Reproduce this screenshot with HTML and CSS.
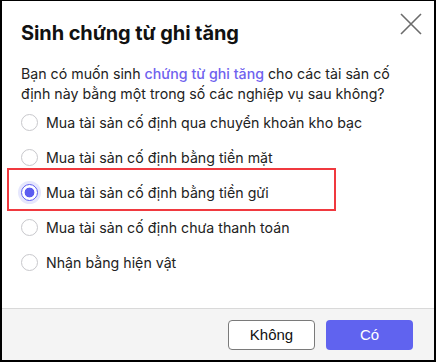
FILE: index.html
```html
<!DOCTYPE html>
<html lang="vi">
<head>
<meta charset="utf-8">
<link rel="stylesheet" href="styles.css">
</head>
<body>
<div class="dialog">
  <div class="content">
    <div class="header">
      <h1 class="title">Sinh chứng từ ghi tăng</h1>
      <button class="close" aria-label="Đóng">
        <svg width="22" height="22" viewBox="0 0 22 22"><path d="M1 1L21 21M21 1L1 21" stroke="#6b6b6b" stroke-width="1.6" fill="none"/></svg>
      </button>
    </div>
    <p class="desc">Bạn có muốn sinh <span class="link">chứng từ ghi tăng</span> cho các tài sản cố định này bằng một trong số các nghiệp vụ sau không?</p>
    <div class="options">
      <label class="option"><span class="radio"></span><span>Mua tài sản cố định qua chuyển khoản kho bạc</span></label>
      <label class="option"><span class="radio"></span><span>Mua tài sản cố định bằng tiền mặt</span></label>
      <label class="option selected"><span class="radio checked"></span><span>Mua tài sản cố định bằng tiền gửi</span></label>
      <label class="option"><span class="radio"></span><span>Mua tài sản cố định chưa thanh toán</span></label>
      <label class="option"><span class="radio"></span><span>Nhận bằng hiện vật</span></label>
    </div>
  </div>
  <div class="footer">
    <button class="btn btn-secondary">Không</button>
    <button class="btn btn-primary">Có</button>
  </div>
</div>
</body>
</html>
```
FILE: styles.css
```css
* { box-sizing: border-box; }
html, body { margin: 0; padding: 0; background: #fff; }
body { font-family: Inter, "Noto Sans", sans-serif; color: #1f1f1f; }
.dialog {
  width: 436px;
  height: 362px;
  border: 1px solid #000;
  border-left-width: 2px;
  border-right-width: 2px;
  border-bottom-width: 2px;
  display: flex;
  flex-direction: column;
}
.content { flex: 1; padding: 12px 12px 0 19px; }
.header { display: flex; justify-content: space-between; align-items: flex-start; }
.title { margin: 6px 0 0; font-size: 20px; line-height: 28px; font-weight: 700; color: #111; letter-spacing: -0.1px; }
.close { border: 0; background: none; padding: 0; margin: 0; width: 22px; height: 22px; cursor: pointer; }
.close svg { display: block; }
.desc { margin: 17px 0 0; font-size: 14.2px; line-height: 20px; color: #222; padding-right: 10px; }
.link { color: #6f62ee; font-weight: 500; }
.options { display: flex; flex-direction: column; margin-top: 1px; }
.option { display: flex; align-items: center; gap: 8px; height: 35px; font-size: 14.2px; color: #222; }
.option.selected {
  border: 2px solid #f0393f;
  margin: -7px 0 -1px -14px;
  padding: 6px 0 0 12px;
  width: 329px;
  height: 43px;
}
.radio { width: 17px; height: 17px; border: 1px solid #c8c8cc; border-radius: 50%; background: #fff; flex: none; }
.radio.checked { border: 1.5px solid #5b5cf0; background: radial-gradient(circle, #5b5cf0 0 4.6px, #fff 5.2px); box-shadow: 0 0 0 3px #e6e7fd; }
.footer {
  height: 52px;
  background: #f4f4f4;
  border-top: 1px solid #d9d9d9;
  display: flex;
  justify-content: flex-end;
  align-items: center;
  gap: 11px;
  padding: 0 21px 0 0;
}
.btn { width: 87px; height: 30px; border-radius: 4px; font-family: "Liberation Sans", Arial, sans-serif; font-size: 15px; cursor: pointer; }
.btn-secondary { background: #fff; border: 1px solid #7a7a7a; color: #111; }
.btn-primary { background: #6063ef; border: 0; color: #fff; }
```
